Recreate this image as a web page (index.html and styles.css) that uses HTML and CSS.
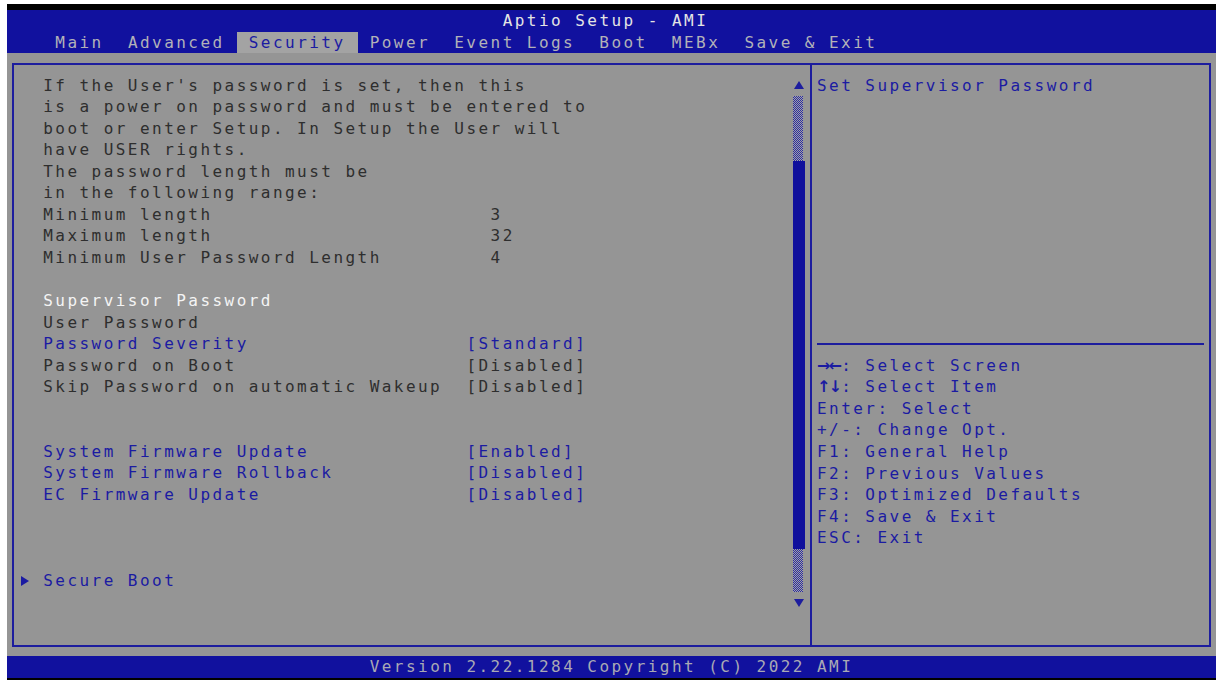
FILE: index.html
```html
<!DOCTYPE html>
<html lang="en">
<head>
<meta charset="utf-8">
<title>Aptio Setup - AMI</title>
<link rel="stylesheet" href="styles.css">
</head>
<body>
<div class="screen">
  <header class="topbar">
    <div class="title">Aptio Setup - AMI</div>
    <nav class="tabs">
      <span class="tab">Main</span>
      <span class="tab">Advanced</span>
      <span class="tab active">Security</span>
      <span class="tab">Power</span>
      <span class="tab">Event Logs</span>
      <span class="tab">Boot</span>
      <span class="tab">MEBx</span>
      <span class="tab">Save &amp; Exit</span>
    </nav>
  </header>

  <main class="main">
    <div class="frame">
      <section class="left">
        <div class="lines">
          <div class="row">If the User's password is set, then this</div>
          <div class="row">is a power on password and must be entered to</div>
          <div class="row">boot or enter Setup. In Setup the User will</div>
          <div class="row">have USER rights.</div>
          <div class="row">The password length must be</div>
          <div class="row">in the following range:</div>
          <div class="row"><span class="label">Minimum length</span><span class="num">3</span></div>
          <div class="row"><span class="label">Maximum length</span><span class="num">32</span></div>
          <div class="row"><span class="label">Minimum User Password Length</span><span class="num">4</span></div>
          <div class="row"></div>
          <div class="row selected">Supervisor Password</div>
          <div class="row">User Password</div>
          <div class="row link"><span class="label">Password Severity</span><span>[Standard]</span></div>
          <div class="row"><span class="label">Password on Boot</span><span>[Disabled]</span></div>
          <div class="row"><span class="label">Skip Password on automatic Wakeup</span><span>[Disabled]</span></div>
          <div class="row"></div>
          <div class="row"></div>
          <div class="row link"><span class="label">System Firmware Update</span><span>[Enabled]</span></div>
          <div class="row link"><span class="label">System Firmware Rollback</span><span>[Disabled]</span></div>
          <div class="row link"><span class="label">EC Firmware Update</span><span>[Disabled]</span></div>
          <div class="row"></div>
          <div class="row"></div>
          <div class="row"></div>
          <div class="row link submenu"><span class="marker"><svg viewBox="0 0 10 12" width="10" height="12"><polygon points="1,1 9,6 1,11" /></svg></span><span>Secure Boot</span></div>
          <div class="row"></div>
          <div class="row"></div>
        </div>
        <div class="scroll">
          <div class="cell arrow"><svg viewBox="0 0 10 8" width="10" height="8"><polygon points="5,0 10,8 0,8" /></svg></div>
          <div class="track t3"></div>
          <div class="thumb"></div>
          <div class="track t2"></div>
          <div class="cell arrow"><svg viewBox="0 0 10 8" width="10" height="8"><polygon points="0,0 10,0 5,8" /></svg></div>
          <div class="cell"></div>
        </div>
      </section>

      <aside class="right">
        <div class="row">Set Supervisor Password</div>
        <div class="spacer"></div>
        <div class="row rule"></div>
        <div class="row"><span class="keys">→←</span>: Select Screen</div>
        <div class="row"><span class="keys">↑↓</span>: Select Item</div>
        <div class="row">Enter: Select</div>
        <div class="row">+/-: Change Opt.</div>
        <div class="row">F1: General Help</div>
        <div class="row">F2: Previous Values</div>
        <div class="row">F3: Optimized Defaults</div>
        <div class="row">F4: Save &amp; Exit</div>
        <div class="row">ESC: Exit</div>
      </aside>
    </div>
  </main>

  <footer class="footer">Version 2.22.1284 Copyright (C) 2022 AMI</footer>
</div>
</body>
</html>
```

FILE: styles.css
```css
/* Text-mode setup screen: 100 columns x 31 rows */
:root {
  --cw: 12.09px;
  --lh: 21.55px;
  --bar: #11119e;
  --panel: #959595;
  --line: #1d1d9e;
  --ink: #2e2e2e;
  --ink-blue: #1b1ba2;
  --ink-white: #f4f4f4;
}

html,
body {
  margin: 0;
  height: 680px;
  overflow: hidden;
  background: #ffffff;
}

body {
  font-family: "DejaVu Sans Mono", "Liberation Mono", monospace;
  font-size: 16px;
  letter-spacing: calc(var(--cw) - 0.60205em);
}

.screen {
  width: calc(var(--cw) * 100);
  margin: 4px 0 0 7px;
  border-top: 6px solid #000;
  border-bottom: 2px solid #000;
}

/* title + menu bar */
.topbar {
  background: var(--bar);
}

.title {
  height: var(--lh);
  line-height: var(--lh);
  padding-left: calc(var(--cw) * 41);
  color: #e4e4e4;
  white-space: pre;
}

.tabs {
  display: flex;
  height: var(--lh);
  line-height: var(--lh);
  padding-left: calc(var(--cw) * 3);
  color: #b2b2b8;
}

.tab {
  padding: 0 var(--cw);
  white-space: pre;
}

.tab.active {
  background: #a3a3a3;
  color: var(--ink-blue);
}

/* framed work area */
.main {
  background: var(--panel);
  padding: calc(var(--lh) / 2 - 1px) calc(var(--cw) / 2 - 1px);
}

.frame {
  display: flex;
  border: 2px solid var(--line);
}

.left {
  box-sizing: border-box;
  width: calc(var(--cw) * 66);
  display: flex;
  padding: calc(var(--lh) / 2 - 1px) calc(var(--cw) / 2 - 1px);
  border-right: 2px solid var(--line);
}

.lines {
  width: calc(var(--cw) * 64);
  color: var(--ink);
}

.row {
  display: flex;
  align-items: center;
  height: var(--lh);
  line-height: var(--lh);
  white-space: pre;
}

.lines .row {
  padding-left: calc(var(--cw) * 2);
}

.label {
  width: calc(var(--cw) * 35);
}

.num {
  padding-left: calc(var(--cw) * 2);
}

.row.selected {
  color: var(--ink-white);
}

.row.link {
  color: var(--ink-blue);
}

.lines .row.submenu {
  padding-left: 0;
}

.marker {
  display: flex;
  align-items: center;
  width: calc(var(--cw) * 2);
  height: var(--lh);
}

.marker svg {
  fill: var(--ink-blue);
  margin-left: 1px;
}

/* scroll bar column */
.scroll {
  width: var(--cw);
  display: flex;
  flex-direction: column;
}

.cell {
  height: var(--lh);
}

.arrow {
  display: flex;
  align-items: center;
  justify-content: center;
}

.arrow svg {
  fill: var(--line);
}

.track {
  width: calc(var(--cw) - 2px);
  background-image: repeating-conic-gradient(#2a2aa4 0 25%, #a4a4a4 0 50%);
  background-size: 2px 2px;
}

.t3 {
  height: calc(var(--lh) * 3);
}

.t2 {
  height: calc(var(--lh) * 2);
}

.thumb {
  height: calc(var(--lh) * 18);
  background: #10109c;
}

/* help column */
.right {
  flex: 1;
  padding: calc(var(--lh) / 2 - 1px) calc(var(--cw) / 2 - 1px);
  color: var(--ink-blue);
}

.spacer {
  height: calc(var(--lh) * 11);
}

.rule::before {
  content: "";
  flex: 1;
  height: 2px;
  background: var(--line);
}

.keys {
  display: inline-block;
  width: calc(var(--cw) * 2);
  font-family: "DejaVu Sans", sans-serif;
  font-size: 16px;
  font-weight: bold;
  letter-spacing: -2px;
}

.footer {
  height: var(--lh);
  line-height: var(--lh);
  padding-left: calc(var(--cw) * 30);
  background: var(--bar);
  color: #a9a9b4;
  white-space: pre;
}
```
